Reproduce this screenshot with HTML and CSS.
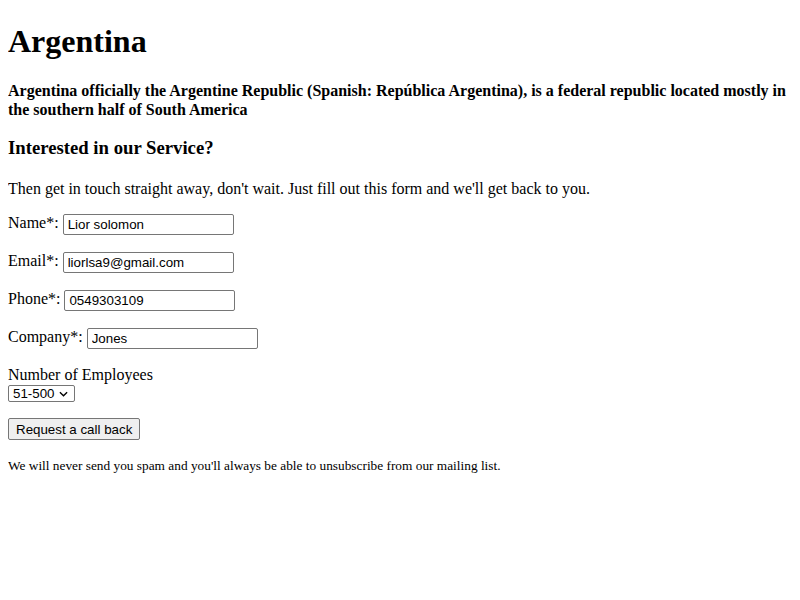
FILE: index.html
```html
<!DOCTYPE html>
<html>
<head>
<meta charset="utf-8">
<title>Argentina</title>
<link rel="stylesheet" href="styles.css">
</head>
<body>
<h1 class="title">Argentina</h1>
<h4 class="lead">Argentina officially the Argentine Republic (Spanish: República Argentina), is a federal republic located mostly in the southern half of South America</h4>
<h3 class="subtitle">Interested in our Service?</h3>
<p class="intro">Then get in touch straight away, don't wait. Just fill out this form and we'll get back to you.</p>
<form class="contact-form">
  <p class="field">Name*: <input class="text-input" type="text" value="Lior solomon"></p>
  <p class="field">Email*: <input class="text-input" type="email" value="liorlsa9@gmail.com"></p>
  <p class="field">Phone*: <input class="text-input" type="tel" value="0549303109"></p>
  <p class="field">Company*: <input class="text-input" type="text" value="Jones"></p>
  <p class="select-field">Number of Employees<br>
    <select class="select-input">
      <option>1-50</option>
      <option selected>51-500</option>
      <option>501+</option>
    </select>
  </p>
  <p class="actions"><button class="submit" type="button">Request a call back</button></p>
  <p class="small-print">We will never send you spam and you'll always be able to unsubscribe from our mailing list.</p>
</form>
</body>
</html>
```

FILE: styles.css
```css
body {
  font-family: "Liberation Serif", "Times New Roman", serif;
  color: #000;
  background: #fff;
  margin: 8px;
}
.title {
  margin: 15px 0 21px;
}
.lead {
  line-height: 19px;
  margin: 21px 0 18px;
}
.subtitle {
  margin: 0 0 21px;
}
.text-input,
.select-input,
.submit {
  font-family: "Liberation Sans", Arial, sans-serif;
  font-size: 13.333px;
  color: #000;
}
.field {
  min-height: 22px;
}
.text-input {
  box-sizing: border-box;
  width: 171px;
  height: 21px;
  vertical-align: top;
  padding: 1px 4px;
  border: 1px solid #767676;
  border-radius: 2px;
}
.select-field {
  margin-top: 16px;
}
.select-input {
  -webkit-appearance: none;
  appearance: none;
  box-sizing: border-box;
  width: 67px;
  height: 17px;
  margin: 0;
  padding: 0 0 0 4px;
  line-height: 15px;
  border: 1px solid #767676;
  border-radius: 2px;
  background: #fff url("data:image/svg+xml;utf8,<svg xmlns='http://www.w3.org/2000/svg' width='10' height='6' viewBox='0 0 10 6'><path d='M1 1l4 4 4-4' fill='none' stroke='%23000' stroke-width='1.5'/></svg>") no-repeat right 6px center;
  background-size: 9px 6px;
}
.actions {
  margin-top: 16px;
}
.submit {
  box-sizing: border-box;
  height: 22px;
  padding: 1px 7px;
  background: #efefef;
  border: 1px solid #767676;
  border-radius: 2px;
}
.small-print {
  margin-top: 18px;
  font-size: 13.33px;
}
```
